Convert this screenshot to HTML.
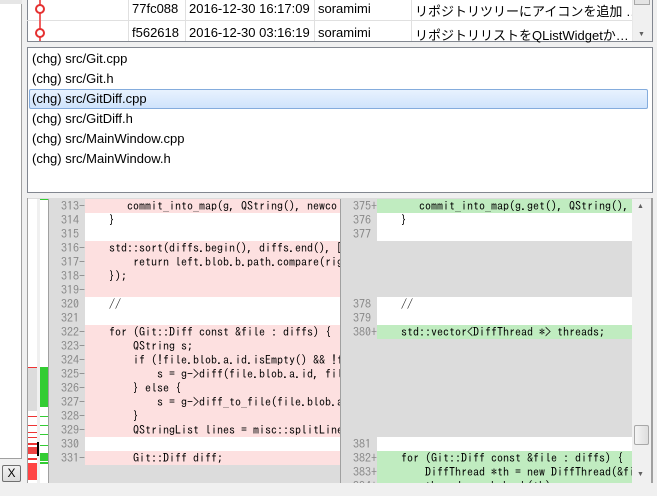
<!DOCTYPE html>
<html><head><meta charset="utf-8"><style>
*{margin:0;padding:0;box-sizing:border-box}
body{width:657px;height:496px;background:#f0f0f0;position:relative;overflow:hidden;font-family:"Liberation Sans","Noto Sans CJK JP",sans-serif;font-size:13px;color:#000}
.a{position:absolute}
.code{font-family:"IPAGothic","Liberation Mono",monospace;font-size:12px;line-height:14px;white-space:normal}
.code div{white-space:pre;height:14px;display:flex}
.code div span.ln{display:inline-block;width:36px;background:#dcdcdc;color:#888;text-align:right;flex:none}
.code div span.t{white-space:pre}
.pk{background:#fde0e0}.gr{background:#c0ecc0}.wh{background:#fff}
</style></head><body>
<div class="a" style="left:0;top:0;width:22px;height:459px;background:#fff;border-right:1px solid #a0a0a0;border-bottom:1px solid #a0a0a0"></div>
<div class="a" style="left:0;top:0;width:22px;height:4px;background:#e6e6e6"></div>
<div class="a" style="left:2px;top:465px;width:19px;height:17px;border:1px solid #707070;border-radius:2px;background:linear-gradient(#f2f2f2,#dcdcdc);font-size:12px;text-align:center;line-height:15px">X</div>

<div class="a" style="left:27px;top:0;width:626px;height:42px;background:#fff;border:1px solid #828790;border-top:none"></div>
<div class="a" style="left:27px;top:20px;width:605px;height:1px;background:#e0e0e0"></div>
<div class="a" style="left:128px;top:0;width:1px;height:41px;background:#e0e0e0"></div>
<div class="a" style="left:185px;top:0;width:1px;height:41px;background:#e0e0e0"></div>
<div class="a" style="left:314px;top:0;width:1px;height:41px;background:#e0e0e0"></div>
<div class="a" style="left:411px;top:0;width:1px;height:41px;background:#e0e0e0"></div>
<div class="a" style="left:39px;top:0;width:2px;height:41px;background:#f06060"></div>
<div class="a" style="left:35px;top:4px;width:10px;height:10px;border:2px solid #e53030;border-radius:50%;background:#fff"></div>
<div class="a" style="left:35px;top:28px;width:10px;height:10px;border:2px solid #e53030;border-radius:50%;background:#fff"></div>
<div class="a" style="left:132px;top:1px">77fc088</div>
<div class="a" style="left:132px;top:25px">f562618</div>
<div class="a" style="left:189px;top:1px">2016-12-30 16:17:09</div>
<div class="a" style="left:189px;top:25px">2016-12-30 03:16:19</div>
<div class="a" style="left:318px;top:1px">soramimi</div>
<div class="a" style="left:318px;top:25px">soramimi</div>
<div class="a" style="left:415px;top:1px">リポジトリツリーにアイコンを追加 …</div>
<div class="a" style="left:415px;top:25px">リポジトリリストをQListWidgetか…</div>
<div class="a" style="left:632px;top:0;width:20px;height:41px;background:#f0f0f0;border-left:1px solid #e8e8e8"></div>
<div class="a" style="left:634px;top:0;width:16px;height:5px;background:#e4e4e4;border:1px solid #a8a8a8;border-top:none"></div>
<div class="a" style="left:638px;top:31px;font-size:7px;color:#606060">▼</div>

<div class="a" style="left:27px;top:47px;width:626px;height:146px;background:#fff;border:1px solid #828790"></div>
<div class="a" style="left:29px;top:89px;width:619px;height:20px;border:1px solid #84acdd;border-radius:2px;background:linear-gradient(#e8f2fe,#cfe3fc)"></div>
<div class="a" style="left:32px;top:49px;line-height:20px">(chg) src/Git.cpp<br>(chg) src/Git.h<br>(chg) src/GitDiff.cpp<br>(chg) src/GitDiff.h<br>(chg) src/MainWindow.cpp<br>(chg) src/MainWindow.h</div>

<div class="a" style="left:27px;top:198px;width:626px;height:285px;background:#dcdcdc;border-left:1px solid #a0a0a0;border-right:2px solid #a0a0a0"></div>
<div class="a" style="left:28px;top:199px;width:9px;height:284px;background:#fff"></div>
<div class="a" style="left:37px;top:199px;width:3px;height:284px;background:#f0f0f0"></div>
<div class="a" style="left:40px;top:199px;width:8px;height:284px;background:#fff"></div>
<div class="a" style="left:48px;top:199px;width:1px;height:284px;background:#a0a0a0"></div>
<div class="a" style="left:40px;top:199px;width:8px;height:1px;background:#3c3"></div>
<div class="a" style="left:28px;top:367px;width:9px;height:44px;background:#dcdcdc"></div>
<div class="a" style="left:28px;top:367px;width:9px;height:1px;background:#e33"></div>
<div class="a" style="left:40px;top:367px;width:8px;height:40px;background:#3c3"></div>
<div class="a" style="left:28px;top:416px;width:9px;height:1px;background:#e33"></div>
<div class="a" style="left:28px;top:425px;width:9px;height:1px;background:#e33"></div>
<div class="a" style="left:28px;top:432px;width:9px;height:1px;background:#e33"></div>
<div class="a" style="left:28px;top:437px;width:9px;height:1px;background:#e33"></div>
<div class="a" style="left:28px;top:443px;width:9px;height:2px;background:#e33"></div>
<div class="a" style="left:28px;top:447px;width:9px;height:7px;background:#e44"></div>
<div class="a" style="left:28px;top:458px;width:9px;height:2px;background:#e33"></div>
<div class="a" style="left:28px;top:463px;width:9px;height:17px;background:#f44"></div>
<div class="a" style="left:40px;top:416px;width:8px;height:1px;background:#3c3"></div>
<div class="a" style="left:40px;top:425px;width:8px;height:1px;background:#3c3"></div>
<div class="a" style="left:40px;top:434px;width:8px;height:1px;background:#3c3"></div>
<div class="a" style="left:40px;top:445px;width:8px;height:1px;background:#3c3"></div>
<div class="a" style="left:40px;top:453px;width:8px;height:8px;background:#3c3"></div>
<div class="a" style="left:40px;top:462px;width:8px;height:2px;background:#3c3"></div>
<div class="a" style="left:37px;top:442px;width:2px;height:14px;background:#000"></div>

<div class="a code" style="left:49px;top:199px;width:291px;height:266px;overflow:hidden"><div class="pk"><span class="ln">313-</span><span class="t">       commit_into_map(g, QString(), newco</span></div><div class="wh"><span class="ln">314 </span><span class="t">    }</span></div><div class="wh"><span class="ln">315 </span></div><div class="pk"><span class="ln">316-</span><span class="t">    std::sort(diffs.begin(), diffs.end(), [</span></div><div class="pk"><span class="ln">317-</span><span class="t">        return left.blob.b.path.compare(rig</span></div><div class="pk"><span class="ln">318-</span><span class="t">    });</span></div><div class="pk"><span class="ln">319-</span></div><div class="wh"><span class="ln">320 </span><span class="t">    //</span></div><div class="wh"><span class="ln">321 </span></div><div class="pk"><span class="ln">322-</span><span class="t">    for (Git::Diff const &amp;file : diffs) {</span></div><div class="pk"><span class="ln">323-</span><span class="t">        QString s;</span></div><div class="pk"><span class="ln">324-</span><span class="t">        if (!file.blob.a.id.isEmpty() &amp;&amp; !f</span></div><div class="pk"><span class="ln">325-</span><span class="t">            s = g-&gt;diff(file.blob.a.id, fil</span></div><div class="pk"><span class="ln">326-</span><span class="t">        } else {</span></div><div class="pk"><span class="ln">327-</span><span class="t">            s = g-&gt;diff_to_file(file.blob.a</span></div><div class="pk"><span class="ln">328-</span><span class="t">        }</span></div><div class="pk"><span class="ln">329-</span><span class="t">        QStringList lines = misc::splitLine</span></div><div class="wh"><span class="ln">330 </span></div><div class="pk"><span class="ln">331-</span><span class="t">        Git::Diff diff;</span></div></div>
<div class="a" style="left:340px;top:199px;width:1px;height:284px;background:#a0a0a0"></div>

<div class="a code" style="left:341px;top:199px;width:291px;height:284px;overflow:hidden"><div class="gr"><span class="ln">375+</span><span class="t">       commit_into_map(g.get(), QString(),</span></div><div class="wh"><span class="ln">376 </span><span class="t">    }</span></div><div class="wh"><span class="ln">377 </span></div><div style="height:56px"></div><div class="wh"><span class="ln">378 </span><span class="t">    //</span></div><div class="wh"><span class="ln">379 </span></div><div class="gr"><span class="ln">380+</span><span class="t">    std::vector&lt;DiffThread *&gt; threads;</span></div><div style="height:98px"></div><div class="wh"><span class="ln">381 </span></div><div class="gr"><span class="ln">382+</span><span class="t">    for (Git::Diff const &amp;file : diffs) {</span></div><div class="gr"><span class="ln">383+</span><span class="t">        DiffThread *th = new DiffThread(&amp;fi</span></div><div class="gr"><span class="ln">384+</span><span class="t">        threads.push_back(th);</span></div></div>
<div class="a" style="left:632px;top:199px;width:19px;height:284px;background:#f0f0f0"></div>
<div class="a" style="left:634px;top:425px;width:15px;height:20px;background:linear-gradient(90deg,#f4f4f4,#dedede);border:1px solid #a8a8a8;border-radius:2px"></div>
<div class="a" style="left:637px;top:203px;font-size:7px;color:#606060">▲</div>
<div class="a" style="left:637px;top:471px;font-size:7px;color:#606060">▼</div>
<div class="a" style="left:0;top:483px;width:657px;height:13px;background:#f0f0f0"></div>
</body></html>
